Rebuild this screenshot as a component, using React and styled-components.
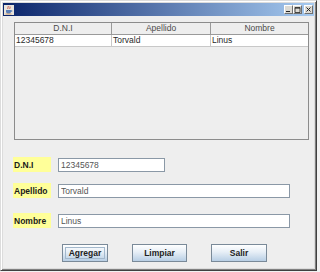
import React from "react";
import styled, { createGlobalStyle } from "styled-components";

const font = `"Liberation Sans", Arial, sans-serif`;
const steel = "#8a98a6";

const Global = createGlobalStyle`
  body {
    margin: 0;
    background: #f2f2f2;
    font-family: ${font};
  }
`;

const Frame = styled.div`
  box-sizing: border-box;
  width: 317px;
  height: 271px;
  display: flex;
  flex-direction: column;
  padding: 2px;
  border: 1px solid;
  border-color: #dcdcdc #404040 #404040 #dcdcdc;
  box-shadow: inset 1px 1px #fff, inset -1px -1px #808080;
  background: #dcdcdc;
`;

const TitleBar = styled.div`
  height: 13px;
  display: flex;
  align-items: center;
  padding: 0 1px 0 1px;
  background: linear-gradient(to right, #0a246a, #a6caf0);
`;

const Controls = styled.div`
  margin-left: auto;
  display: flex;
  align-items: center;
`;

const Ctl = styled.span`
  box-sizing: border-box;
  width: 9px;
  height: 9px;
  display: flex;
  align-items: center;
  justify-content: center;
  margin-left: ${p => p.gap || 0}px;
  border: 1px solid;
  border-color: #fff #707070 #707070 #fff;
  background: #dcdad4;
`;

const Content = styled.div`
  flex: 1;
  background: #eeeeee;
  padding: 6px 5px 0 11px;
`;

const Table = styled.div`
  box-sizing: border-box;
  width: 295px;
  height: 118px;
  border: 1px solid #8c8c8c;
  background: #eeeeee;
`;

const Row = styled.div`
  display: grid;
  grid-template-columns: 97px 99px 1fr;
  height: 11px;
  background: ${p => (p.head ? "#eeeeee" : "#ffffff")};
  border-bottom: 1px solid ${p => (p.head ? "#9a9a9a" : "#c8c8c8")};
`;

const Cell = styled.div`
  box-sizing: border-box;
  font-size: 8.5px;
  line-height: 11px;
  padding-left: ${p => (p.head ? 0 : 1)}px;
  text-align: ${p => (p.head ? "center" : "left")};
  color: ${p => (p.head ? "#4a4a4a" : "#2a2a2a")};
  border-right: 1px solid ${p => (p.head ? "#9a9a9a" : "#c8c8c8")};
  white-space: nowrap;
  overflow: hidden;

  &:last-child {
    border-right: 0;
  }
`;

const FieldRow = styled.div`
  display: flex;
  align-items: center;
  gap: 7px;
  margin-top: ${p => p.top}px;
  margin-left: -1px;
`;

const Label = styled.div`
  box-sizing: border-box;
  width: 38px;
  height: 15px;
  display: flex;
  align-items: center;
  padding-left: 1px;
  background: #ffff99;
  font-size: 8.5px;
  font-weight: bold;
  color: #1a1a1a;
`;

const Input = styled.input`
  box-sizing: border-box;
  width: ${p => p.w}px;
  height: 14px;
  margin: 0;
  padding: 0 2px;
  border: 1px solid ${steel};
  background: #fff;
  font-family: ${font};
  font-size: 8.5px;
  color: #555;
  outline: none;
`;

const ButtonRow = styled.div`
  display: flex;
  gap: 24px;
  margin-top: 16px;
  margin-left: 48px;
`;

const Button = styled.button`
  box-sizing: border-box;
  width: ${p => p.w}px;
  height: 18px;
  margin: 0;
  padding: 0;
  display: flex;
  align-items: center;
  justify-content: center;
  border: 1px solid #7a8a99;
  background: linear-gradient(#ffffff, #e6eef6 45%, #b8cfe5);
  font-family: ${font};
  font-size: 8.5px;
  font-weight: bold;
  color: #222;
`;

const Focus = styled.span`
  padding: 0 3px;
  line-height: 10px;
  border: 1px solid #a3b8cc;
`;

const JavaIcon = () => (
  <svg width="10" height="10" viewBox="0 0 10 10">
    <rect width="10" height="10" fill="#e8e4dc" />
    <path d="M4 1c1 1-1 2 0 3M6 1.5c.8.8-.8 1.6 0 2.5" stroke="#c0392b" strokeWidth="0.8" fill="none" />
    <path d="M2 5h5v1.5c0 1.5-1 2-2.5 2S2 8 2 6.5z" fill="#5b7fb8" />
    <path d="M7 5.5h1v1H7" stroke="#5b7fb8" strokeWidth="0.7" fill="none" />
    <path d="M1.5 9h6" stroke="#c08040" strokeWidth="0.7" />
  </svg>
);

const Glyph = ({ kind }) => (
  <svg width="7" height="7" viewBox="0 0 7 7">
    {kind === "min" && <rect x="1" y="5" width="4" height="1" fill="#222" />}
    {kind === "max" && (
      <path d="M1 1.5h5v5h-5z M1 2.2h5" stroke="#222" strokeWidth="0.8" fill="none" />
    )}
    {kind === "close" && (
      <path d="M1.5 1.5l4 4M5.5 1.5l-4 4" stroke="#222" strokeWidth="1" />
    )}
  </svg>
);

const rows = [{ dni: "12345678", apellido: "Torvald", nombre: "Linus" }];

export default function App() {
  const current = rows[0];
  return (
    <>
      <Global />
      <Frame>
        <TitleBar>
          <JavaIcon />
          <Controls>
            <Ctl><Glyph kind="min" /></Ctl>
            <Ctl><Glyph kind="max" /></Ctl>
            <Ctl gap={2}><Glyph kind="close" /></Ctl>
          </Controls>
        </TitleBar>
        <Content>
          <Table>
            <Row head>
              <Cell head>D.N.I</Cell>
              <Cell head>Apellido</Cell>
              <Cell head>Nombre</Cell>
            </Row>
            {rows.map((r, i) => (
              <Row key={i}>
                <Cell>{r.dni}</Cell>
                <Cell>{r.apellido}</Cell>
                <Cell>{r.nombre}</Cell>
              </Row>
            ))}
          </Table>
          <FieldRow top={17}>
            <Label>D.N.I</Label>
            <Input w={107} defaultValue={current.dni} />
          </FieldRow>
          <FieldRow top={11}>
            <Label>Apellido</Label>
            <Input w={232} defaultValue={current.apellido} />
          </FieldRow>
          <FieldRow top={15}>
            <Label>Nombre</Label>
            <Input w={232} defaultValue={current.nombre} />
          </FieldRow>
          <ButtonRow>
            <Button w={46}><Focus>Agregar</Focus></Button>
            <Button w={55}>Limpiar</Button>
            <Button w={56}>Salir</Button>
          </ButtonRow>
        </Content>
      </Frame>
    </>
  );
}
